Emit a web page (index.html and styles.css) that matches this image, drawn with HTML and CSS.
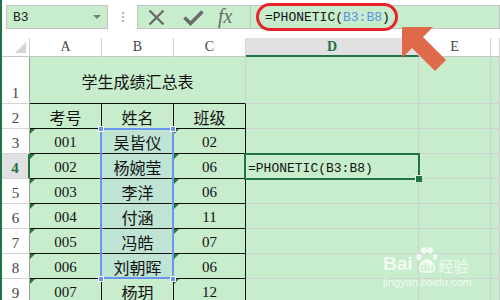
FILE: index.html
```html
<!DOCTYPE html>
<html>
<head>
<meta charset="utf-8">
<link rel="stylesheet" href="styles.css">
</head>
<body>
<div class="page">
  <div class="app">
    <div class="toolbar">
      <div class="namebox"><span class="nb-text">B3</span><span class="nb-arrow"></span></div>
      <div class="dots"><i></i><i></i><i></i></div>
      <div class="fxbtns">
        <svg class="ic-x" width="17" height="17" viewBox="0 0 17 17"><path d="M1.5 1.5 L15.5 15.5 M15.5 1.5 L1.5 15.5" stroke="#6b6b6b" stroke-width="2.4" fill="none"/></svg>
        <svg class="ic-check" width="21" height="17" viewBox="0 0 21 17"><path d="M1.5 8.5 L7.5 14.5 L19.5 2.5" stroke="#6b6b6b" stroke-width="3.6" fill="none"/></svg>
        <span class="fx">fx</span>
      </div>
      <div class="formula">=PHONETIC(<span class="ref">B3:B8</span>)</div>
    </div>
    <div class="sheet">
      <div class="corner"><span class="tri"></span></div>
      <div class="ch">A</div>
      <div class="ch">B</div>
      <div class="ch">C</div>
      <div class="ch ch-sel">D</div>
      <div class="ch">E</div>
      <div class="ch"></div>

      <div class="rh">1</div>
      <div class="c title">学生成绩汇总表</div>
      <div class="c"></div>
      <div class="c"></div>
      <div class="c"></div>

      <div class="rh">2</div>
      <div class="c t z">考号</div>
      <div class="c t z">姓名</div>
      <div class="c t z">班级</div>
      <div class="c"></div>
      <div class="c"></div>
      <div class="c"></div>

      <div class="rh">3</div>
      <div class="c t n g">001</div>
      <div class="c t z sel">吴皆仪</div>
      <div class="c t n g">02</div>
      <div class="c"></div>
      <div class="c"></div>
      <div class="c"></div>

      <div class="rh rh-sel">4</div>
      <div class="c t n g">002</div>
      <div class="c t z sel">杨婉莹</div>
      <div class="c t n g">06</div>
      <div class="c fcell">=PHONETIC(B3:B8)</div>
      <div class="c"></div>
      <div class="c"></div>

      <div class="rh">5</div>
      <div class="c t n g">003</div>
      <div class="c t z sel">李洋</div>
      <div class="c t n g">06</div>
      <div class="c"></div>
      <div class="c"></div>
      <div class="c"></div>

      <div class="rh">6</div>
      <div class="c t n g">004</div>
      <div class="c t z sel">付涵</div>
      <div class="c t n g">11</div>
      <div class="c"></div>
      <div class="c"></div>
      <div class="c"></div>

      <div class="rh">7</div>
      <div class="c t n g">005</div>
      <div class="c t z sel">冯皓</div>
      <div class="c t n g">07</div>
      <div class="c"></div>
      <div class="c"></div>
      <div class="c"></div>

      <div class="rh">8</div>
      <div class="c t n g">006</div>
      <div class="c t z sel">刘朝晖</div>
      <div class="c t n g">06</div>
      <div class="c"></div>
      <div class="c"></div>
      <div class="c"></div>

      <div class="rh">9</div>
      <div class="c t n g">007</div>
      <div class="c t z">杨玥</div>
      <div class="c t n g">12</div>
      <div class="c"></div>
      <div class="c"></div>
      <div class="c"></div>
    </div>
  </div>

  <div class="range"></div>
  <span class="hd hd-tl"></span>
  <span class="hd hd-tr"></span>
  <span class="hd hd-bl"></span>
  <span class="hd hd-br"></span>
  <div class="active"></div>
  <span class="fill-handle"></span>
  <div class="ring"></div>
  <svg class="arrow" width="500" height="300" viewBox="0 0 500 300"><polygon points="402,27 433,27 423,37 446,60 435,71 412,48 402,58" fill="#df6a4a"/></svg>

  <div class="wm">
    <div class="wm-top">
      <span class="wm-bai">Bai</span>
      <svg class="paw" width="21" height="28" viewBox="0 0 21 28">
        <ellipse cx="3" cy="11" rx="2.6" ry="3.2" fill="rgba(255,255,255,0.75)"/>
        <ellipse cx="8" cy="4.5" rx="2.8" ry="3.4" fill="rgba(255,255,255,0.75)"/>
        <ellipse cx="14" cy="4.5" rx="2.8" ry="3.4" fill="rgba(255,255,255,0.75)"/>
        <ellipse cx="19" cy="11" rx="2.2" ry="3" fill="rgba(255,255,255,0.75)"/>
        <path d="M3 24 C2 18 7 13 11 13 C15 13 20 18 19 24 C18 28 4 28 3 24 Z" fill="rgba(255,255,255,0.75)"/>
        <text x="11" y="25" text-anchor="middle" font-family="Liberation Sans, sans-serif" font-weight="bold" font-size="11" fill="#c7edcc">du</text>
      </svg>
      <span class="wm-jy">经验</span>
    </div>
    <div class="wm-url">jingyan.baidu.com</div>
  </div>
</div>
</body>
</html>
```

FILE: styles.css
```css
* { box-sizing: border-box; }
html, body { margin: 0; padding: 0; }
body {
  width: 500px;
  height: 300px;
  overflow: hidden;
  background: #ffffff;
  font-family: "Liberation Serif", "Noto Sans CJK SC", serif;
}
.page {
  position: relative;
  width: 500px;
  height: 300px;
  overflow: hidden;
}
.app {
  width: 500px;
  height: 300px;
  border-left: 2px solid #217346;
  background: #ffffff;
}

/* toolbar */
.toolbar {
  height: 38px;
  display: flex;
  align-items: flex-start;
  padding-top: 5px;
  padding-left: 4px;
}
.namebox {
  width: 102px;
  height: 24px;
  border: 1px solid #c3c3c3;
  background: #c7edcc;
  display: flex;
  align-items: center;
  padding-left: 6px;
}
.nb-text {
  font: 13px "Liberation Mono", monospace;
  color: #222;
}
.nb-arrow {
  margin-left: auto;
  margin-right: 6px;
  width: 0;
  height: 0;
  border-left: 4px solid transparent;
  border-right: 4px solid transparent;
  border-top: 4px solid #7d7d7d;
}
.dots {
  margin-left: 14px;
  width: 2px;
  display: flex;
  flex-direction: column;
  gap: 2px;
  padding-top: 7px;
}
.dots i {
  display: block;
  width: 2px;
  height: 2px;
  background: #b5b5b5;
}
.fxbtns {
  margin-left: 13px;
  width: 114px;
  height: 24px;
  border: 1px solid #c3c3c3;
  background: #c7edcc;
  display: flex;
  align-items: center;
  padding-left: 10px;
}
.ic-check { margin-left: 18px; }
.fx {
  margin-left: 14px;
  font: italic 20px "Liberation Serif", serif;
  color: #6b6b6b;
  line-height: 1;
  margin-top: -2px;
}
.formula {
  flex: 1;
  height: 24px;
  border: 1px solid #c3c3c3;
  border-left: none;
  background: #c7edcc;
  display: flex;
  align-items: center;
  padding-left: 14px;
  font: 13px "Liberation Mono", monospace;
  color: #111;
  white-space: pre;
}
.ref { color: #5b8fe6; }

/* sheet */
.sheet {
  display: grid;
  grid-template-columns: 28px 72px 72px 72px 173px 72px 1fr;
  grid-template-rows: 19px 47px repeat(8, 25px);
}
.corner {
  position: relative;
  background: #fff;
  border-right: 1px solid #d5d5d5;
  border-bottom: 1px solid #c6c6c6;
}
.tri {
  position: absolute;
  right: 3px;
  bottom: 3px;
  width: 0;
  height: 0;
  border-left: 11px solid transparent;
  border-bottom: 11px solid #d6d6d6;
}
.ch {
  background: #fff;
  border-right: 1px solid #d5d5d5;
  border-bottom: 1px solid #c6c6c6;
  display: flex;
  justify-content: center;
  align-items: flex-end;
  padding-bottom: 1px;
  font: 14px "Liberation Serif", serif;
  color: #444;
}
.ch-sel {
  background: #e1e1e1;
  border-bottom: 2px solid #217346;
  color: #217346;
  font-weight: bold;
  padding-bottom: 0;
}
.rh {
  background: #fff;
  border-right: 1px solid #9e9e9e;
  border-bottom: 1px solid #d5d5d5;
  display: flex;
  justify-content: center;
  align-items: flex-end;
  padding-bottom: 1px;
  font: 15px "Liberation Serif", serif;
  color: #444;
}
.rh-sel {
  background: #e1e1e1;
  color: #217346;
  font-weight: bold;
  border-right: 2px solid #217346;
}
.c {
  position: relative;
  background: #c7edcc;
  border-right: 1px solid #d0d0d0;
  border-bottom: 1px solid #d0d0d0;
  display: flex;
  justify-content: center;
  align-items: center;
  color: #111;
}
.t {
  border-right-color: #111;
  border-bottom-color: #111;
}
.title {
  grid-column: span 3;
  border-bottom-color: #111;
  font: 16px "Noto Sans CJK SC", sans-serif;
  padding-top: 1px;
}
.z {
  font: 16px "Noto Sans CJK SC", sans-serif;
  padding-top: 1px;
}
.n {
  font: 15px "Liberation Serif", serif;
  padding-top: 2px;
}
.sel { background: #bfe4d4; }
.g::before {
  content: "";
  position: absolute;
  left: 0;
  top: 0;
  width: 0;
  height: 0;
  border-top: 5px solid #1f7a35;
  border-right: 5px solid transparent;
}
.fcell {
  justify-content: flex-start;
  align-items: flex-end;
  padding-left: 2px;
  padding-bottom: 2px;
  font: 13px "Liberation Mono", monospace;
  white-space: pre;
}

/* overlays */
.range {
  position: absolute;
  left: 100px;
  top: 128px;
  width: 74px;
  height: 151px;
  border: 2px solid #6b96ee;
}
.hd {
  position: absolute;
  width: 6px;
  height: 6px;
  background: #6b96ee;
  border: 1px solid #fff;
}
.hd-tl { left: 98px; top: 126px; }
.hd-tr { left: 170px; top: 126px; }
.hd-bl { left: 98px; top: 276px; }
.hd-br { left: 170px; top: 276px; }
.active {
  position: absolute;
  left: 244px;
  top: 153px;
  width: 176px;
  height: 27px;
  border: 2px solid #217346;
}
.fill-handle {
  position: absolute;
  left: 415px;
  top: 175px;
  width: 7px;
  height: 7px;
  background: #217346;
  border-left: 1px solid #fff;
  border-top: 1px solid #fff;
}
.ring {
  position: absolute;
  left: 256px;
  top: 3px;
  width: 142px;
  height: 28px;
  border: 3px solid #e8232b;
  border-radius: 14px;
}
.arrow {
  position: absolute;
  left: 0;
  top: 0;
}
.wm {
  position: absolute;
  left: 383px;
  top: 244px;
  color: rgba(255, 255, 255, 0.75);
}
.wm-top {
  display: flex;
  align-items: flex-end;
  height: 30px;
}
.wm-bai {
  font: bold 19px "Liberation Sans", sans-serif;
  line-height: 1;
  margin-bottom: 1px;
}
.paw { margin-left: 3px; }
.wm-jy {
  margin-left: 2px;
  font: 15px "Noto Sans CJK SC", sans-serif;
  line-height: 1;
  margin-bottom: 1px;
}
.wm-url {
  margin-top: 3px;
  font: 11px "Liberation Sans", sans-serif;
  line-height: 1;
}
```
